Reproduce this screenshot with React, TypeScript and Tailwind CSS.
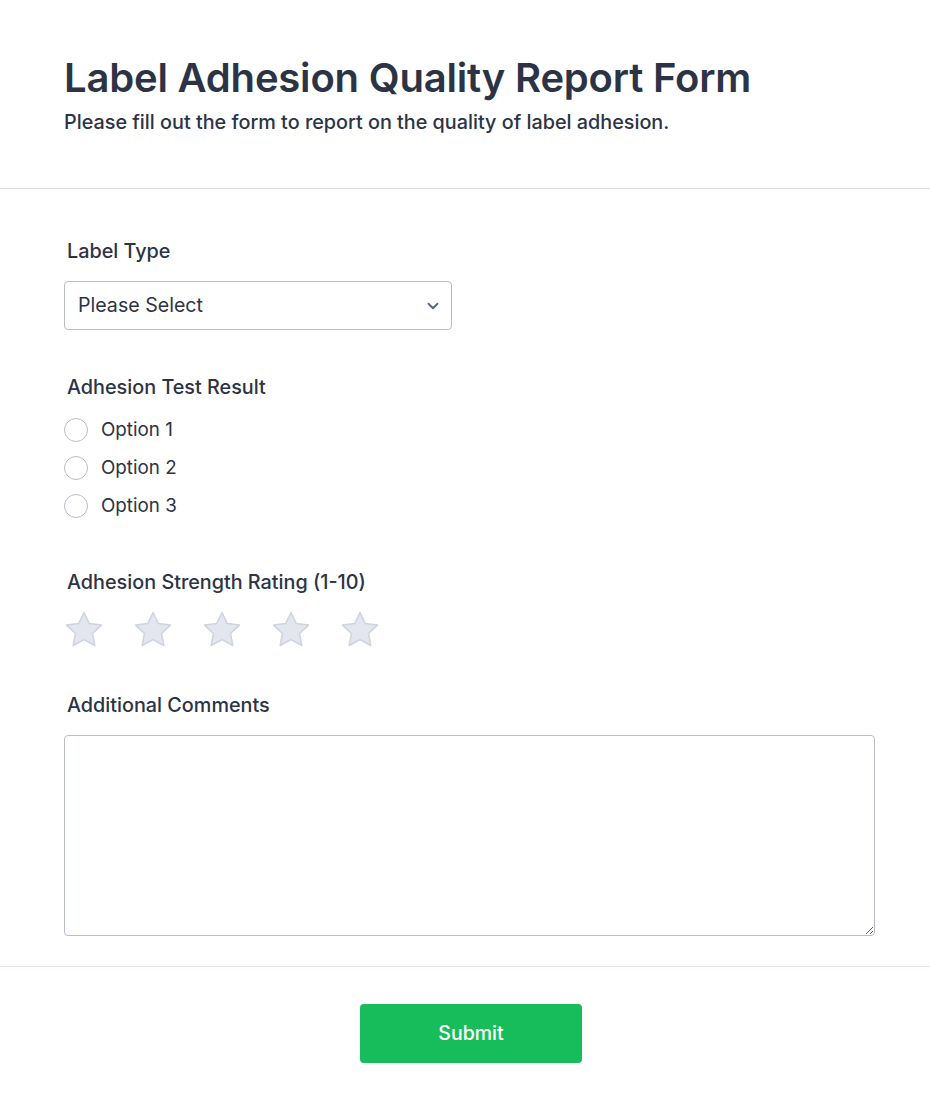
import { ChevronDown } from "lucide-react";

const font = { fontFamily: "Inter, 'Noto Sans', sans-serif" };

const Star = () => (
  <svg width="40" height="38" viewBox="0 0 40 38" className="shrink-0">
    <path
      d="M20 2.5l5.3 11.1 12.1 1.5-8.9 8.4 2.3 12-10.8-5.9-10.8 5.9 2.3-12-8.9-8.4 12.1-1.5z"
      fill="#e3e6ef"
      stroke="#cfd3de"
      strokeWidth="1.5"
      strokeLinejoin="round"
    />
  </svg>
);

export default function App() {
  return (
    <div className="w-[930px] min-h-[1113px] bg-white text-[#2c3345]" style={font}>
      <div className="px-16 pt-[54px] pb-[52px] border-b border-[#dcdfe9]">
        <h1 className="text-[40px] leading-[48px] font-semibold tracking-[-0.2px]">
          Label Adhesion Quality Report Form
        </h1>
        <p className="text-[19.8px] leading-[28px] font-medium mt-[6px]">
          Please fill out the form to report on the quality of label adhesion.
        </p>
      </div>

      <div className="px-16 pt-[48px] pb-[30px] border-b border-[#e6e8ef] flex flex-col">
        <label className="pl-[3px] text-[19.8px] leading-[28px] font-medium">Label Type</label>
        <div className="mt-[16px] w-[388px] h-[49px] rounded-[4px] border border-[#b8bdc9] flex items-center justify-between pl-[13px] pr-[9px]">
          <span className="text-[19.6px]">Please Select</span>
          <ChevronDown size={18} strokeWidth={2.5} className="text-[#57647e]" />
        </div>

        <label className="pl-[3px] mt-[43px] text-[19.8px] leading-[28px] font-medium">
          Adhesion Test Result
        </label>
        <div className="mt-[17px] flex flex-col gap-[14px]">
          {["Option 1", "Option 2", "Option 3"].map((o) => (
            <div key={o} className="flex items-center gap-[13px] h-[24px]">
              <span className="w-[24px] h-[24px] rounded-full border border-[#b8bdc9] shrink-0" />
              <span className="text-[18.8px] leading-[24px]">{o}</span>
            </div>
          ))}
        </div>

        <label className="pl-[3px] mt-[50px] text-[19.8px] leading-[28px] font-medium">
          Adhesion Strength Rating (1-10)
        </label>
        <div className="mt-[14px] flex gap-[29px]">
          {[0, 1, 2, 3, 4].map((i) => (
            <Star key={i} />
          ))}
        </div>

        <label className="pl-[3px] mt-[43px] text-[19.8px] leading-[28px] font-medium">
          Additional Comments
        </label>
        <textarea className="mt-[16px] w-[811px] h-[201px] rounded-[4px] border border-[#b8bdc9] outline-none resize-y p-3 text-[18px]" />
      </div>

      <div className="flex justify-center pl-[12px] pt-[37px] pb-[50px]">
        <button className="w-[222px] h-[59px] rounded-[4px] bg-[#18bd5b] text-white text-[19.5px] font-medium">
          Submit
        </button>
      </div>
    </div>
  );
}
